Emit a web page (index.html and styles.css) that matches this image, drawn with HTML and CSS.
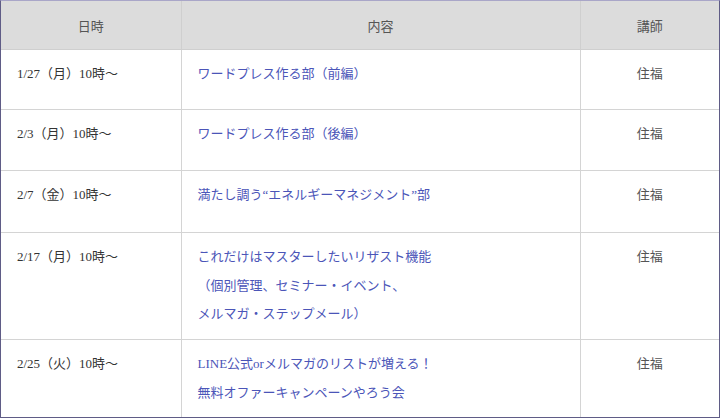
FILE: index.html
```html
<!DOCTYPE html>
<html lang="ja">
<head>
<meta charset="utf-8">
<link rel="stylesheet" href="styles.css">
</head>
<body>
<div class="frame">
  <table class="schedule">
    <colgroup>
      <col class="c-date">
      <col class="c-body">
      <col class="c-teacher">
    </colgroup>
    <thead>
      <tr>
        <th>日時</th>
        <th>内容</th>
        <th>講師</th>
      </tr>
    </thead>
    <tbody>
      <tr class="r1">
        <td class="date">1/27（月）10時〜</td>
        <td class="body"><a href="#">ワードプレス作る部（前編）</a></td>
        <td class="teacher">住福</td>
      </tr>
      <tr class="r2">
        <td class="date">2/3（月）10時〜</td>
        <td class="body"><a href="#">ワードプレス作る部（後編）</a></td>
        <td class="teacher">住福</td>
      </tr>
      <tr class="r3">
        <td class="date">2/7（金）10時〜</td>
        <td class="body"><a href="#">満たし調う“エネルギーマネジメント”部</a></td>
        <td class="teacher">住福</td>
      </tr>
      <tr class="r4">
        <td class="date">2/17（月）10時〜</td>
        <td class="body"><a href="#">これだけはマスターしたいリザスト機能<br>（個別管理、セミナー・イベント、<br>メルマガ・ステップメール）</a></td>
        <td class="teacher">住福</td>
      </tr>
      <tr class="r5">
        <td class="date">2/25（火）10時〜</td>
        <td class="body"><a href="#">LINE公式orメルマガのリストが増える！<br>無料オファーキャンペーンやろう会</a></td>
        <td class="teacher">住福</td>
      </tr>
    </tbody>
  </table>
</div>
</body>
</html>
```

FILE: styles.css
```css
html, body {
  margin: 0;
  padding: 0;
  background: #ffffff;
}

body {
  font-family: "Liberation Serif", "Noto Sans CJK JP", serif;
  font-size: 13px;
  color: #333333;
}

.frame {
  width: 718px;
  height: 416px;
  border: 1px solid #5f5c86;
  border-top-color: #a9a6c8;
  overflow: hidden;
  box-sizing: content-box;
}

.schedule {
  width: 718px;
  border-collapse: collapse;
  border-style: hidden;
  table-layout: fixed;
}

.c-date { width: 180px; }
.c-body { width: 399px; }
.c-teacher { width: 139px; }

.schedule th {
  height: 48px;
  padding: 0;
  background: #dcdcdc;
  color: #555555;
  font-weight: normal;
  text-align: center;
  vertical-align: middle;
  border: 1px solid #cfcfcf;
}

.schedule td {
  padding: 10px 16px 10px;
  line-height: 28.5px;
  vertical-align: top;
  border: 1px solid #d4d4d4;
}

.schedule tr.r1 { height: 60px; }
.schedule tr.r2 { height: 61px; }
.schedule tr.r3 { height: 62px; }
.schedule tr.r4 { height: 107px; }

.schedule td.date {
  color: #333333;
}

.schedule td.body a {
  color: #4b55b8;
  text-decoration: none;
}

.schedule td.teacher {
  text-align: center;
  color: #555555;
}
```
